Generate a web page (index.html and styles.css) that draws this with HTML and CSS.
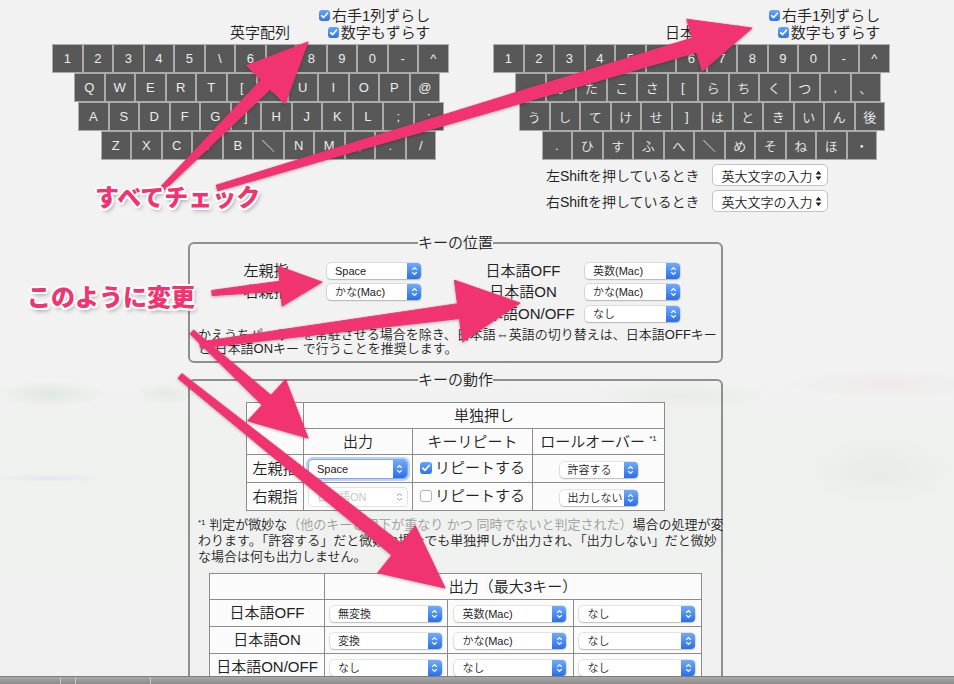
FILE: index.html
```html
<!DOCTYPE html>
<html lang="ja">
<head>
<meta charset="utf-8">
<title>かえうち 設定</title>
<link rel="stylesheet" href="styles.css">
</head>
<body>
<main class="page">
  <section class="keyboards">
    <div class="kb kb-en">
      <div class="kb-head">
        <span class="kb-title">英字配列</span>
        <div class="kb-opts">
          <label class="opt"><span class="cb on"><svg viewBox="0 0 11 11"><path d="M2.6 5.6l2 2 3.8-4.4"/></svg></span>右手1列ずらし</label>
          <label class="opt"><span class="cb on"><svg viewBox="0 0 11 11"><path d="M2.6 5.6l2 2 3.8-4.4"/></svg></span>数字もずらす</label>
        </div>
      </div>
      <div class="row r1"><span class="key">1</span><span class="key">2</span><span class="key">3</span><span class="key">4</span><span class="key">5</span><span class="key">\</span><span class="key">6</span><span class="key">7</span><span class="key">8</span><span class="key">9</span><span class="key">0</span><span class="key">-</span><span class="key">^</span></div>
      <div class="row r2"><span class="key">Q</span><span class="key">W</span><span class="key">E</span><span class="key">R</span><span class="key">T</span><span class="key">[</span><span class="key">Y</span><span class="key">U</span><span class="key">I</span><span class="key">O</span><span class="key">P</span><span class="key">@</span></div>
      <div class="row r3"><span class="key">A</span><span class="key">S</span><span class="key">D</span><span class="key">F</span><span class="key">G</span><span class="key">]</span><span class="key">H</span><span class="key">J</span><span class="key">K</span><span class="key">L</span><span class="key">;</span><span class="key">:</span></div>
      <div class="row r4"><span class="key">Z</span><span class="key">X</span><span class="key">C</span><span class="key">V</span><span class="key">B</span><span class="key jp">＼</span><span class="key">N</span><span class="key">M</span><span class="key">,</span><span class="key">.</span><span class="key">/</span></div>
    </div>

    <div class="kb kb-ja">
      <div class="kb-head">
        <span class="kb-title">日本語配列</span>
        <div class="kb-opts">
          <label class="opt"><span class="cb on"><svg viewBox="0 0 11 11"><path d="M2.6 5.6l2 2 3.8-4.4"/></svg></span>右手1列ずらし</label>
          <label class="opt"><span class="cb on"><svg viewBox="0 0 11 11"><path d="M2.6 5.6l2 2 3.8-4.4"/></svg></span>数字もずらす</label>
        </div>
      </div>
      <div class="row r1"><span class="key">1</span><span class="key">2</span><span class="key">3</span><span class="key">4</span><span class="key">5</span><span class="key">\</span><span class="key">6</span><span class="key">7</span><span class="key">8</span><span class="key">9</span><span class="key">0</span><span class="key">-</span><span class="key">^</span></div>
      <div class="row r2"><span class="key jp">。</span><span class="key jp">か</span><span class="key jp">た</span><span class="key jp">こ</span><span class="key jp">さ</span><span class="key">[</span><span class="key jp">ら</span><span class="key jp">ち</span><span class="key jp">く</span><span class="key jp">つ</span><span class="key">,</span><span class="key jp">、</span></div>
      <div class="row r3"><span class="key jp">う</span><span class="key jp">し</span><span class="key jp">て</span><span class="key jp">け</span><span class="key jp">せ</span><span class="key">]</span><span class="key jp">は</span><span class="key jp">と</span><span class="key jp">き</span><span class="key jp">い</span><span class="key jp">ん</span><span class="key jp">後</span></div>
      <div class="row r4"><span class="key">.</span><span class="key jp">ひ</span><span class="key jp">す</span><span class="key jp">ふ</span><span class="key jp">へ</span><span class="key jp">＼</span><span class="key jp">め</span><span class="key jp">そ</span><span class="key jp">ね</span><span class="key jp">ほ</span><span class="key jp">・</span></div>
      <div class="shift-opts">
        <div class="shift-row"><span>左Shiftを押しているとき</span><span class="psel"><span>英大文字の入力</span><svg viewBox="0 0 7 11" width="7" height="11"><path d="M3.5 0.8L6.4 4.6H0.6Z M3.5 10.2L6.4 6.4H0.6Z"/></svg></span></div>
        <div class="shift-row"><span>右Shiftを押しているとき</span><span class="psel"><span>英大文字の入力</span><svg viewBox="0 0 7 11" width="7" height="11"><path d="M3.5 0.8L6.4 4.6H0.6Z M3.5 10.2L6.4 6.4H0.6Z"/></svg></span></div>
      </div>
    </div>
  </section>

  <fieldset class="fs fs-pos">
    <legend>キーの位置</legend>
    <div class="pos">
      <div class="pos-grp">
        <span class="pos-lbl">左親指</span>
        <span class="sel w94"><span class="sel-t">Space</span><span class="sel-b"><svg viewBox="0 0 7 10"><path d="M1.2 3.9L3.5 1.6 5.8 3.9M1.2 6.1L3.5 8.4 5.8 6.1"/></svg></span></span>
        <span class="pos-lbl">右親指</span>
        <span class="sel w94"><span class="sel-t">かな(Mac)</span><span class="sel-b"><svg viewBox="0 0 7 10"><path d="M1.2 3.9L3.5 1.6 5.8 3.9M1.2 6.1L3.5 8.4 5.8 6.1"/></svg></span></span>
      </div>
      <div class="pos-grp right">
        <span class="pos-lbl">日本語OFF</span>
        <span class="sel w95"><span class="sel-t">英数(Mac)</span><span class="sel-b"><svg viewBox="0 0 7 10"><path d="M1.2 3.9L3.5 1.6 5.8 3.9M1.2 6.1L3.5 8.4 5.8 6.1"/></svg></span></span>
        <span class="pos-lbl">日本語ON</span>
        <span class="sel w95"><span class="sel-t">かな(Mac)</span><span class="sel-b"><svg viewBox="0 0 7 10"><path d="M1.2 3.9L3.5 1.6 5.8 3.9M1.2 6.1L3.5 8.4 5.8 6.1"/></svg></span></span>
        <span class="pos-lbl">日本語ON/OFF</span>
        <span class="sel w95"><span class="sel-t">なし</span><span class="sel-b"><svg viewBox="0 0 7 10"><path d="M1.2 3.9L3.5 1.6 5.8 3.9M1.2 6.1L3.5 8.4 5.8 6.1"/></svg></span></span>
      </div>
    </div>
    <p class="note">かえうちパーサーを常駐させる場合を除き、日本語⇔英語の切り替えは、日本語OFFキー<br>と 日本語ONキー で行うことを推奨します。</p>
  </fieldset>

  <fieldset class="fs fs-act">
    <legend>キーの動作</legend>
    <table class="tbl t1">
      <colgroup><col class="c57"><col class="c109"><col class="c120"><col class="c132"></colgroup>
      <tr class="h26"><td rowspan="2"></td><td colspan="3">単独押し</td></tr>
      <tr class="h26"><td>出力</td><td>キーリピート</td><td>ロールオーバー <span class="fn-mark">*1</span></td></tr>
      <tr class="h28">
        <td>左親指</td>
        <td><span class="sel w98 focus"><span class="sel-t">Space</span><span class="sel-b"><svg viewBox="0 0 7 10"><path d="M1.2 3.9L3.5 1.6 5.8 3.9M1.2 6.1L3.5 8.4 5.8 6.1"/></svg></span></span></td>
        <td><label class="rep"><span class="cb on big"><svg viewBox="0 0 11 11"><path d="M2.6 5.6l2 2 3.8-4.4"/></svg></span>リピートする</label></td>
        <td><span class="sel w78"><span class="sel-t">許容する</span><span class="sel-b"><svg viewBox="0 0 7 10"><path d="M1.2 3.9L3.5 1.6 5.8 3.9M1.2 6.1L3.5 8.4 5.8 6.1"/></svg></span></span></td>
      </tr>
      <tr class="h28">
        <td>右親指</td>
        <td><span class="sel w98 dis"><span class="sel-t">日本語ON</span><span class="sel-b"><svg viewBox="0 0 7 10"><path d="M1.2 3.9L3.5 1.6 5.8 3.9M1.2 6.1L3.5 8.4 5.8 6.1"/></svg></span></span></td>
        <td><label class="rep"><span class="cb off big"></span>リピートする</label></td>
        <td><span class="sel w78"><span class="sel-t">出力しない</span><span class="sel-b"><svg viewBox="0 0 7 10"><path d="M1.2 3.9L3.5 1.6 5.8 3.9M1.2 6.1L3.5 8.4 5.8 6.1"/></svg></span></span></td>
      </tr>
    </table>
    <p class="footnote"><span class="fn-mark">*1</span> 判定が微妙な<span class="muted">（他のキーと押下が重なり かつ 同時でないと判定された）</span>場合の処理が変<br>わります。「許容する」だと微妙な場合でも単独押しが出力され、「出力しない」だと微妙<br>な場合は何も出力しません。</p>
    <table class="tbl t2">
      <colgroup><col class="c115"><col class="c123"><col class="c126"><col class="c128"></colgroup>
      <tr class="h26"><td></td><td colspan="3">出力（最大3キー）</td></tr>
      <tr class="h27">
        <td>日本語OFF</td>
        <td><span class="sel w112"><span class="sel-t">無変換</span><span class="sel-b"><svg viewBox="0 0 7 10"><path d="M1.2 3.9L3.5 1.6 5.8 3.9M1.2 6.1L3.5 8.4 5.8 6.1"/></svg></span></span></td>
        <td><span class="sel w112"><span class="sel-t">英数(Mac)</span><span class="sel-b"><svg viewBox="0 0 7 10"><path d="M1.2 3.9L3.5 1.6 5.8 3.9M1.2 6.1L3.5 8.4 5.8 6.1"/></svg></span></span></td>
        <td><span class="sel w116"><span class="sel-t">なし</span><span class="sel-b"><svg viewBox="0 0 7 10"><path d="M1.2 3.9L3.5 1.6 5.8 3.9M1.2 6.1L3.5 8.4 5.8 6.1"/></svg></span></span></td>
      </tr>
      <tr class="h27">
        <td>日本語ON</td>
        <td><span class="sel w112"><span class="sel-t">変換</span><span class="sel-b"><svg viewBox="0 0 7 10"><path d="M1.2 3.9L3.5 1.6 5.8 3.9M1.2 6.1L3.5 8.4 5.8 6.1"/></svg></span></span></td>
        <td><span class="sel w112"><span class="sel-t">かな(Mac)</span><span class="sel-b"><svg viewBox="0 0 7 10"><path d="M1.2 3.9L3.5 1.6 5.8 3.9M1.2 6.1L3.5 8.4 5.8 6.1"/></svg></span></span></td>
        <td><span class="sel w116"><span class="sel-t">なし</span><span class="sel-b"><svg viewBox="0 0 7 10"><path d="M1.2 3.9L3.5 1.6 5.8 3.9M1.2 6.1L3.5 8.4 5.8 6.1"/></svg></span></span></td>
      </tr>
      <tr class="h27">
        <td>日本語ON/OFF</td>
        <td><span class="sel w112"><span class="sel-t">なし</span><span class="sel-b"><svg viewBox="0 0 7 10"><path d="M1.2 3.9L3.5 1.6 5.8 3.9M1.2 6.1L3.5 8.4 5.8 6.1"/></svg></span></span></td>
        <td><span class="sel w112"><span class="sel-t">なし</span><span class="sel-b"><svg viewBox="0 0 7 10"><path d="M1.2 3.9L3.5 1.6 5.8 3.9M1.2 6.1L3.5 8.4 5.8 6.1"/></svg></span></span></td>
        <td><span class="sel w116"><span class="sel-t">なし</span><span class="sel-b"><svg viewBox="0 0 7 10"><path d="M1.2 3.9L3.5 1.6 5.8 3.9M1.2 6.1L3.5 8.4 5.8 6.1"/></svg></span></span></td>
      </tr>
    </table>
  </fieldset>
</main>

<svg class="annot" width="954" height="684" viewBox="0 0 954 684">
  <g class="arrows">
    <polygon transform="translate(163 188) rotate(-45.2)" points="0,-2.5 145.8,-6.5 145.8,-27 205.8,0 145.8,27 145.8,6.5 0,2.5"/>
    <polygon transform="translate(217 188) rotate(-16.65)" points="0,-3 498.4,-7.5 498.4,-27 558.4,0 498.4,27 498.4,7.5 0,3"/>
    <polygon transform="translate(212 293) rotate(-5.71)" points="0,-2.5 68.5,-5 68.5,-20 110.5,0 68.5,20 68.5,5 0,2.5"/>
    <polygon transform="translate(200 345) rotate(-7.48)" points="0,-3 260.7,-7.5 260.7,-31 322.7,0 260.7,31 260.7,7.5 0,3"/>
    <polygon transform="translate(192 332) rotate(42.4)" points="0,-2.5 101.1,-6.5 101.1,-28 157.1,0 101.1,28 101.1,6.5 0,2.5"/>
    <polygon transform="translate(180 376) rotate(38.66)" points="0,-3 277.4,-7.5 277.4,-30 339.4,0 277.4,30 277.4,7.5 0,3"/>
  </g>
</svg>
<div class="callout callout-check">すべてチェック</div>
<div class="callout callout-change">このように変更</div>
<div class="dock"><span class="dock-seg s1"></span><span class="dock-seg s2"></span><span class="dock-seg s3"></span></div>
</body>
</html>
```

FILE: styles.css
```css
html, body {
  margin: 0;
  padding: 0;
  overflow: hidden;
}

body {
  width: 954px;
  height: 684px;
  position: relative;
  color: #222;
  font-family: "Liberation Sans", "Noto Sans CJK JP", sans-serif;
  font-weight: 350;
  background-color: #f1f1f1;
  background-image:
    radial-gradient(ellipse 55px 13px at 50px 394px, rgba(170, 205, 170, 0.25), rgba(170, 205, 170, 0)),
    radial-gradient(ellipse 32px 11px at 165px 394px, rgba(170, 205, 170, 0.2), rgba(170, 205, 170, 0)),
    radial-gradient(ellipse 100px 14px at 885px 384px, rgba(240, 200, 200, 0.22), rgba(240, 200, 200, 0)),
    radial-gradient(ellipse 90px 15px at 680px 396px, rgba(190, 215, 190, 0.2), rgba(190, 215, 190, 0)),
    radial-gradient(ellipse 75px 34px at 880px 470px, rgba(224, 232, 224, 0.6), rgba(224, 232, 224, 0)),
    radial-gradient(ellipse 55px 4px at 50px 478px, rgba(195, 210, 235, 0.35), rgba(195, 210, 235, 0)),
    linear-gradient(#f2f2f2 0, #f2f2f2 360px, #eff1ef 430px, #f0f1f0 100%);
}

/* ---------- keyboards ---------- */
.keyboards {
  display: flex;
  gap: 44.5px;
  padding: 7px 0 0 52px;
}

.kb {
  width: 396.5px;
}

.kb-head {
  display: flex;
  align-items: flex-end;
  gap: 29px;
  font-size: 15px;
  line-height: 17px;
  margin-bottom: 3px;
}

.kb-en .kb-head { padding-left: 178px; }
.kb-ja .kb-head { padding-left: 172px; }

.kb-title {
  white-space: nowrap;
}

.kb-opts {
  display: flex;
  flex-direction: column;
  align-items: flex-end;
}

.opt {
  display: flex;
  align-items: center;
  white-space: nowrap;
}

.cb {
  display: inline-flex;
  box-sizing: border-box;
  width: 11px;
  height: 11px;
  margin-right: 2px;
  border-radius: 3px;
}

.cb.on {
  background: linear-gradient(#62a6fb, #2f73e8);
}

.cb.off {
  background: #fff;
  border: 1px solid #b3b3b3;
}

.cb.big {
  width: 12px;
  height: 12px;
  margin-right: 3px;
}

.cb svg {
  width: 100%;
  height: 100%;
}

.cb svg path {
  fill: none;
  stroke: #fff;
  stroke-width: 1.6;
  stroke-linecap: round;
  stroke-linejoin: round;
}

.row {
  display: flex;
}

.row.r2 { margin-left: 22px; }
.row.r3 { margin-left: 26px; }
.row.r4 { margin-left: 48.5px; }

.key {
  box-sizing: border-box;
  width: 30.5px;
  height: 29px;
  display: flex;
  align-items: center;
  justify-content: center;
  background: #585858;
  border: 1px solid #ababab;
  color: #ececec;
  font-size: 13px;
  font-weight: 400;
}

.key.jp {
  font-family: "Noto Sans CJK JP", sans-serif;
  font-size: 13px;
  font-weight: 350;
}

.shift-opts {
  margin-top: 2px;
  padding-right: 9px;
}

.shift-row {
  height: 26px;
  display: flex;
  align-items: center;
  justify-content: center;
  gap: 12px;
  font-size: 14px;
}

.psel {
  box-sizing: border-box;
  width: 116px;
  height: 22px;
  display: flex;
  align-items: center;
  justify-content: space-between;
  padding: 0 5px 0 9px;
  background: #fff;
  border: 1px solid #c4c4c4;
  border-radius: 5px;
  font-size: 13px;
}

.psel svg path {
  fill: #222;
}

/* ---------- fieldsets ---------- */
.fs {
  box-sizing: border-box;
  width: 535px;
  margin: 0 0 0 188px;
  padding: 0 8px 5px;
  border: 2px solid #8f8f8f;
  border-radius: 6px;
  min-inline-size: auto;
}

.fs legend {
  margin: 0 auto;
  padding: 0;
  font-size: 15px;
  line-height: 18px;
}

.fs-pos { margin-top: 20px; }
.fs-act { margin-top: 8px; height: 340px; }

.pos {
  display: flex;
  align-items: flex-start;
  gap: 52px;
  margin: 8px 0 0 18px;
}

.pos-grp {
  display: grid;
  grid-template-columns: 100px 94px;
  column-gap: 11px;
  grid-auto-rows: 21.5px;
  align-items: center;
  font-size: 15px;
}

.pos-grp.right {
  grid-template-columns: 100px 95px;
  column-gap: 12px;
}

.pos-lbl {
  text-align: center;
  line-height: 18px;
  white-space: nowrap;
}

.note {
  margin: 3.5px 0 0;
  font-size: 13px;
  line-height: 14px;
  white-space: nowrap;
}

/* ---------- mac style popup selects ---------- */
.sel {
  box-sizing: border-box;
  display: inline-flex;
  align-items: stretch;
  height: 16px;
  vertical-align: middle;
  background: #fff;
  border-radius: 4px;
  box-shadow: 0 0 0 0.5px rgba(0, 0, 0, 0.18), 0 1px 1.5px rgba(0, 0, 0, 0.18);
  font-size: 11px;
  line-height: 16px;
  color: #222;
  overflow: hidden;
  text-align: left;
}

.sel-t {
  flex: 1;
  padding-left: 8px;
  white-space: nowrap;
}

.sel-b {
  width: 14px;
  display: flex;
  align-items: center;
  justify-content: center;
  background: linear-gradient(#6eabfb, #2c6fe6);
}

.sel-b svg {
  width: 7px;
  height: 10px;
}

.sel-b svg path {
  fill: none;
  stroke: #fff;
  stroke-width: 1.3;
}

.sel.focus {
  height: 18px;
  line-height: 18px;
  box-shadow: 0 0 0 1px #80a9ec, 0 0 0 3px rgba(110, 160, 240, 0.45);
}

.sel.dis {
  color: #c6c6c6;
  height: 18px;
  line-height: 18px;
  box-shadow: 0 0 0 1px #e2e2e2;
}

.sel.dis .sel-b {
  background: none;
}

.sel.dis .sel-b svg path {
  stroke: #9a9a9a;
  stroke-width: 1;
}

.w78 { width: 78px; }
.w94 { width: 94px; }
.w95 { width: 95px; }
.w98 { width: 98px; }
.w112 { width: 112px; }
.w116 { width: 116px; }

/* ---------- tables ---------- */
.tbl {
  border-collapse: collapse;
  table-layout: fixed;
  margin: 0 auto;
  background: #fbfbfb;
  font-size: 15px;
}

.tbl td {
  border: 1px solid #8c8c8c;
  padding: 0;
  text-align: center;
  line-height: 18px;
  white-space: nowrap;
}

.t1 { width: 418px; margin-top: 13px; }
.t2 { width: 492px; margin-top: 8px; }

.c57 { width: 57px; }
.c109 { width: 109px; }
.c120 { width: 120px; }
.c132 { width: 132px; }
.c115 { width: 115px; }
.c123 { width: 123px; }
.c126 { width: 126px; }
.c128 { width: 128px; }

.h26 { height: 26px; }
.h27 { height: 27px; }
.h28 { height: 28px; }

.rep {
  display: inline-flex;
  align-items: center;
}

.fn-mark {
  font-size: 8px;
  vertical-align: top;
  line-height: 12px;
}

.footnote {
  margin: 6px 0 0;
  font-size: 13px;
  line-height: 16px;
  white-space: nowrap;
}

.muted {
  color: #9c9c9c;
}

/* ---------- annotations (overlay) ---------- */
.annot {
  position: absolute;
  left: 0;
  top: 0;
  pointer-events: none;
  filter: drop-shadow(0 1px 1.5px rgba(0, 0, 0, 0.28));
}

.arrows polygon {
  fill: #f1346f;
  stroke: #f1346f;
  stroke-width: 1;
  stroke-linejoin: round;
}

.callout {
  position: absolute;
  font-family: "Noto Sans CJK JP", sans-serif;
  font-weight: 900;
  font-size: 24px;
  line-height: 30px;
  color: #f1346f;
  white-space: nowrap;
  text-shadow:
    2px 0 #fff, -2px 0 #fff, 0 2px #fff, 0 -2px #fff,
    1.5px 1.5px #fff, -1.5px 1.5px #fff, 1.5px -1.5px #fff, -1.5px -1.5px #fff,
    2px 3px 4px rgba(0, 0, 0, 0.35);
}

.callout-check {
  left: 95px;
  top: 181px;
}

.callout-change {
  left: 27px;
  top: 281px;
}

/* ---------- bottom dock strip ---------- */
.dock {
  position: fixed;
  left: 0;
  right: 0;
  bottom: 0;
  height: 7px;
  background: linear-gradient(#a8a8a8, #8b8b8b);
  border-top: 1px solid #7c7c7c;
}

.dock-seg {
  position: absolute;
  top: 0;
  bottom: 0;
  width: 1px;
  background: #c9c9c9;
}

.dock-seg.s1 { left: 60px; }
.dock-seg.s2 { left: 75px; }
.dock-seg.s3 { left: 150px; }
```
